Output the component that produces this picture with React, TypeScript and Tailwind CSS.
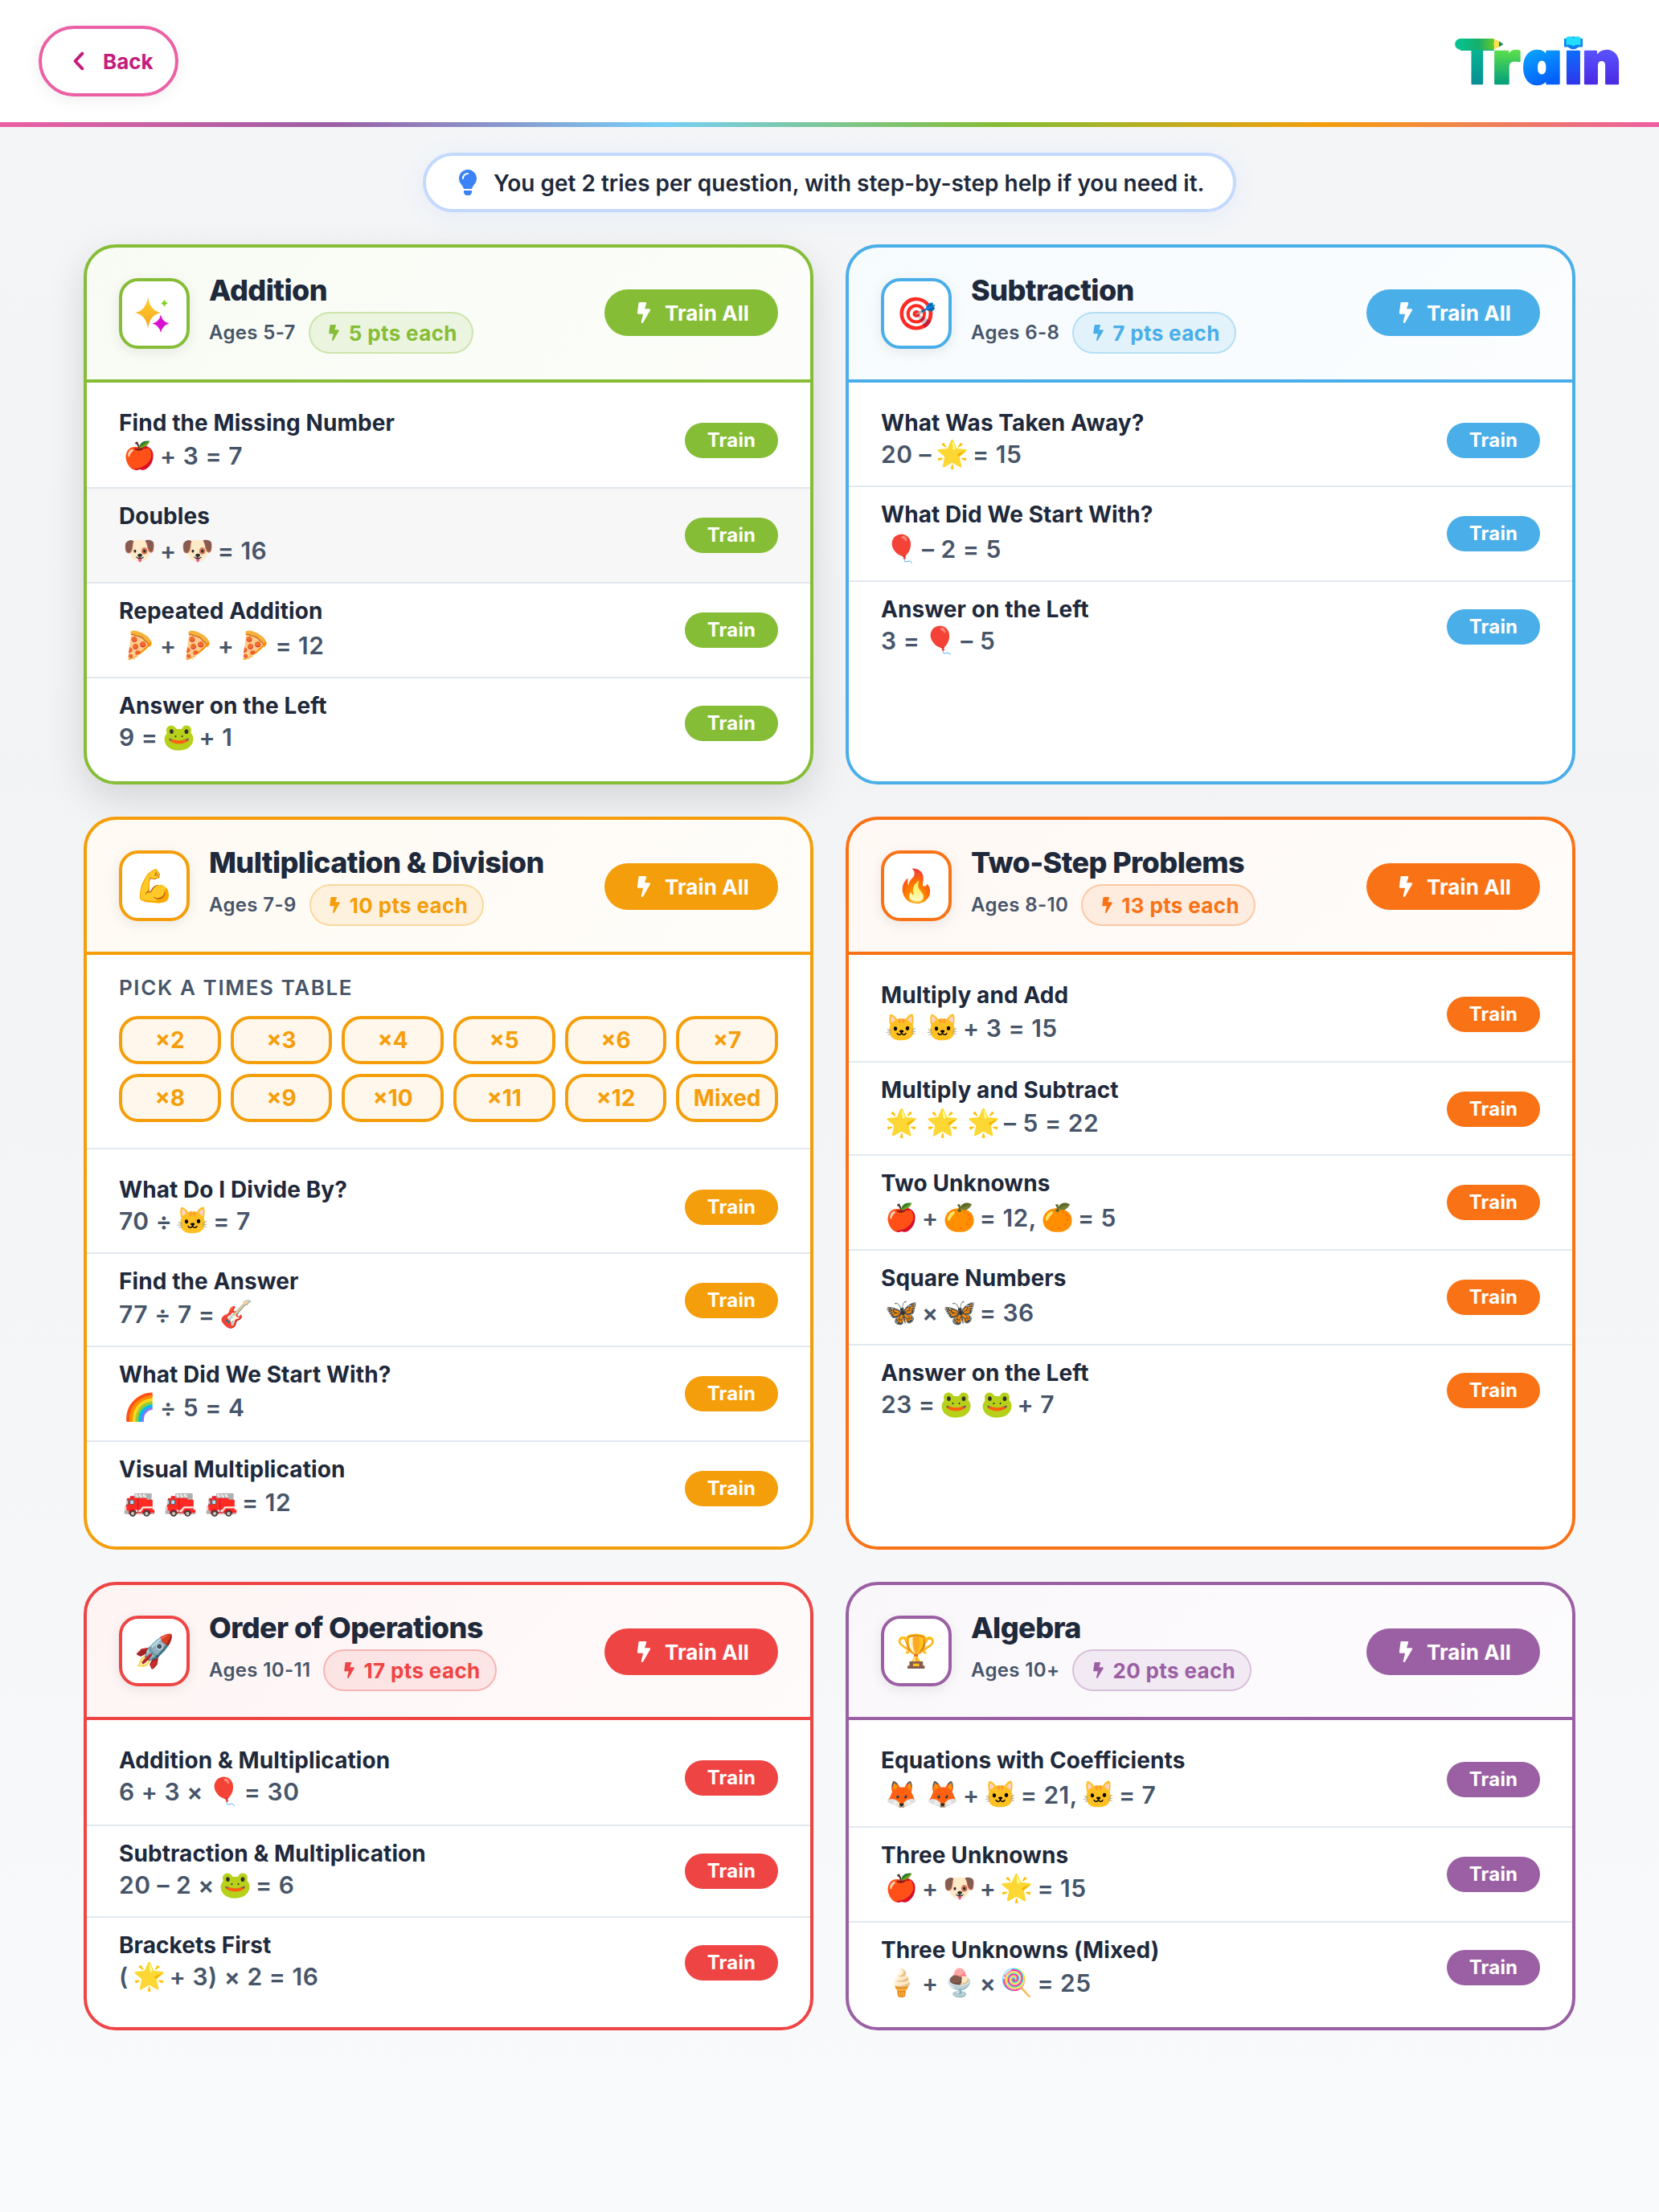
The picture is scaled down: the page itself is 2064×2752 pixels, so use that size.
import React from "react";
import { FaBolt, FaLightbulb } from "react-icons/fa";

type Row = {
  title: string;
  eq: string;
  /** classes: row height, gap above the equation, top margin of the button */
  h: string;
  gap: string;
  btn: string;
  hover?: boolean;
};

type Theme = {
  border: string;
  solid: string;
  header: string;
  badge: string;
};

type Section = {
  title: string;
  ages: string;
  pts: number;
  icon: string;
  theme: Theme;
  allTop: string;
  cardHeight: string;
  raised?: boolean;
  tables?: boolean;
  rows: Row[];
};

const G3 = "mt-[3px]";
const G5 = "mt-[5px]";
const G7 = "mt-[7px]";
const B34 = "mt-[34px]";
const B36 = "mt-[36px]";
const H114 = "h-[114px]";
const H116 = "h-[116px]";
const H118 = "h-[118px]";

const SECTIONS: Section[] = [
  {
    title: "Addition",
    ages: "Ages 5-7",
    pts: 5,
    icon: "sparkles",
    allTop: "mt-[52px]",
    cardHeight: "h-[672px]",
    raised: true,
    theme: {
      border: "border-[#86bd36]",
      solid: "bg-[#86bd36]",
      header: "bg-linear-135 from-[#86bd36]/6 to-[#86bd36]/2",
      badge: "text-[#86bd36] bg-[#86bd36]/12 border-[#86bd36]/30",
    },
    rows: [
      { title: "Find the Missing Number", eq: "🍎|+ 3 = 7", h: H116, gap: G5, btn: B34 },
      { title: "Doubles", eq: "🐶|+|🐶|= 16", h: H118, gap: G7, btn: B36, hover: true },
      { title: "Repeated Addition", eq: "🍕|+|🍕|+|🍕|= 12", h: H118, gap: G7, btn: B36 },
      { title: "Answer on the Left", eq: "9 =|🐸|+ 1", h: H114, gap: G3, btn: B34 },
    ],
  },
  {
    title: "Subtraction",
    ages: "Ages 6-8",
    pts: 7,
    icon: "🎯",
    allTop: "mt-[52px]",
    cardHeight: "h-[672px]",
    theme: {
      border: "border-[#4aaee8]",
      solid: "bg-[#4aaee8]",
      header: "bg-linear-135 from-[#4aaee8]/5 to-[#4aaee8]/2",
      badge: "text-[#4aaee8] bg-[#4aaee8]/12 border-[#4aaee8]/30",
    },
    rows: [
      { title: "What Was Taken Away?", eq: "20 –|🌟|= 15", h: H114, gap: G3, btn: B34 },
      { title: "What Did We Start With?", eq: "🎈|– 2 = 5", h: H118, gap: G7, btn: B36 },
      { title: "Answer on the Left", eq: "3 =|🎈|– 5", h: H114, gap: G3, btn: B34 },
    ],
  },
  {
    title: "Multiplication & Division",
    ages: "Ages 7-9",
    pts: 10,
    icon: "💪",
    allTop: "mt-[54px]",
    cardHeight: "h-[912px]",
    tables: true,
    theme: {
      border: "border-[#f59e0b]",
      solid: "bg-[#f59e0b]",
      header: "bg-linear-135 from-[#f59e0b]/5 to-[#f59e0b]/2",
      badge: "text-[#f59e0b] bg-[#f59e0b]/10 border-[#f59e0b]/30",
    },
    rows: [
      { title: "What Do I Divide By?", eq: "70 ÷|🐱|= 7", h: H114, gap: G3, btn: B34 },
      { title: "Find the Answer", eq: "77 ÷ 7 =|🎸|", h: H116, gap: G5, btn: B36 },
      { title: "What Did We Start With?", eq: "🌈|÷ 5 = 4", h: H118, gap: G5, btn: B36 },
      { title: "Visual Multiplication", eq: "🚒|🚒|🚒|= 12", h: H114, gap: G5, btn: B36 },
    ],
  },
  {
    title: "Two-Step Problems",
    ages: "Ages 8-10",
    pts: 13,
    icon: "🔥",
    allTop: "mt-[54px]",
    cardHeight: "h-[912px]",
    theme: {
      border: "border-[#f97316]",
      solid: "bg-[#f97316]",
      header: "bg-linear-135 from-[#f97316]/5 to-[#f97316]/2",
      badge: "text-[#f97316] bg-[#f97316]/10 border-[#f97316]/30",
    },
    rows: [
      { title: "Multiply and Add", eq: "🐱|🐱|+ 3 = 15", h: H118, gap: G5, btn: B36 },
      { title: "Multiply and Subtract", eq: "🌟|🌟|🌟|– 5 = 22", h: H116, gap: G5, btn: B36 },
      { title: "Two Unknowns", eq: "🍎|+|🍊|= 12,|🍊|= 5", h: H118, gap: G7, btn: B36 },
      { title: "Square Numbers", eq: "🦋|×|🦋|= 36", h: H118, gap: G7, btn: B36 },
      { title: "Answer on the Left", eq: "23 =|🐸|🐸|+ 7", h: H114, gap: G3, btn: B34 },
    ],
  },
  {
    title: "Order of Operations",
    ages: "Ages 10-11",
    pts: 17,
    icon: "🚀",
    allTop: "mt-[54px]",
    cardHeight: "h-[558px]",
    theme: {
      border: "border-[#ef4444]",
      solid: "bg-[#ef4444]",
      header: "bg-linear-135 from-[#ef4444]/6 to-[#ef4444]/2",
      badge: "text-[#ef4444] bg-[#ef4444]/10 border-[#ef4444]/30",
    },
    rows: [
      { title: "Addition & Multiplication", eq: "6 + 3 ×|🎈|= 30", h: H116, gap: G3, btn: B34 },
      { title: "Subtraction & Multiplication", eq: "20 – 2 ×|🐸|= 6", h: H114, gap: G3, btn: B34 },
      { title: "Brackets First", eq: "(|🌟|+ 3) × 2 = 16", h: H114, gap: G3, btn: B34 },
    ],
  },
  {
    title: "Algebra",
    ages: "Ages 10+",
    pts: 20,
    icon: "🏆",
    allTop: "mt-[54px]",
    cardHeight: "h-[558px]",
    theme: {
      border: "border-[#9b5fa4]",
      solid: "bg-[#9b5fa4]",
      header: "bg-linear-135 from-[#9b5fa4]/5 to-[#9b5fa4]/2",
      badge: "text-[#9b5fa4] bg-[#9b5fa4]/10 border-[#9b5fa4]/30",
    },
    rows: [
      { title: "Equations with Coefficients", eq: "🦊|🦊|+|🐱|= 21,|🐱|= 7", h: H118, gap: G7, btn: B36 },
      { title: "Three Unknowns", eq: "🍎|+|🐶|+|🌟|= 15", h: H118, gap: G5, btn: B36 },
      { title: "Three Unknowns (Mixed)", eq: "🍦|+|🍨|×|🍭|= 25", h: H114, gap: G5, btn: B34 },
    ],
  },
];

const TABLES = ["×2", "×3", "×4", "×5", "×6", "×7", "×8", "×9", "×10", "×11", "×12", "Mixed"];

const isEmoji = (s: string) => /\p{Extended_Pictographic}/u.test(s);

function Equation({ value }: { value: string }) {
  return (
    <>
      {value
        .split("|")
        .filter(Boolean)
        .map((part, i) =>
          isEmoji(part) ? (
            <span
              key={i}
              className={`-mr-px inline-flex w-[52px] justify-center text-[33px] leading-none tracking-normal ${
                part === "🍕" ? "-scale-x-100" : ""
              }`}
            >
              {part}
            </span>
          ) : (
            <span key={i}>{part}</span>
          ),
        )}
    </>
  );
}

function Sparkles() {
  return (
    <svg viewBox="0 0 80 80" className="size-20">
      <defs>
        <linearGradient id="sp" x1="0" y1="0" x2="0" y2="1">
          <stop offset="0" stopColor="#ffcf2e" />
          <stop offset="1" stopColor="#f7a521" />
        </linearGradient>
      </defs>
      <path d="M32 19 Q34 36 48 39 Q34 42 32 59 Q30 42 16 39 Q30 36 32 19Z" fill="url(#sp)" />
      <path d="M48 41.500 Q50 50.500 58.500 52.500 Q50 54.500 48 64 Q46 54.500 37.500 52.500 Q46 50.500 48 41.500Z" fill="#d911d0" />
      <path d="M52.500 22.500 Q53.500 26.300 57 27.300 Q53.500 28.300 52.500 32 Q51.500 28.300 48 27.300 Q51.500 26.300 52.500 22.500Z" fill="#7fd320" />
    </svg>
  );
}

function Logo() {
  return (
    <svg width="208" height="68" viewBox="0 0 208 68" className="overflow-visible" aria-label="Train">
      <defs>
        <linearGradient id="lt" x1="0" y1="-56" x2="0" y2="0" gradientUnits="userSpaceOnUse">
          <stop offset="0.2" stopColor="#08b78f" />
          <stop offset="1" stopColor="#088f96" />
        </linearGradient>
        <linearGradient id="lr" x1="0" y1="-41" x2="0" y2="0" gradientUnits="userSpaceOnUse">
          <stop offset="0" stopColor="#5be04c" />
          <stop offset="1" stopColor="#04a07a" />
        </linearGradient>
        <linearGradient id="la" x1="10" y1="-42" x2="28" y2="0" gradientUnits="userSpaceOnUse">
          <stop offset="0" stopColor="#0aa4ff" />
          <stop offset="1" stopColor="#0460f8" />
        </linearGradient>
        <linearGradient id="li" x1="0" y1="-41" x2="0" y2="0" gradientUnits="userSpaceOnUse">
          <stop offset="0" stopColor="#0d6dff" />
          <stop offset="1" stopColor="#2d38ea" />
        </linearGradient>
        <linearGradient id="ln" x1="0" y1="-41" x2="0" y2="0" gradientUnits="userSpaceOnUse">
          <stop offset="0" stopColor="#5a52ff" />
          <stop offset="1" stopColor="#4a2be2" />
        </linearGradient>
        <linearGradient id="lp" x1="2" y1="0" x2="50" y2="0" gradientUnits="userSpaceOnUse">
          <stop offset="0" stopColor="#07c596" />
          <stop offset="0.6" stopColor="#14ae6c" />
          <stop offset="1" stopColor="#62c72c" />
        </linearGradient>
      </defs>
      <g
        strokeLinejoin="round"
        strokeWidth="2.5"
        style={{ fontFeatureSettings: '"cv11"' }}
        className="font-['Inter'] text-[74px] font-black"
      >
        <text transform="translate(8 61.500) scale(0.86 1)" fill="url(#lt)" stroke="url(#lt)">T</text>
        <text transform="translate(48.500 61.500) scale(1.09 1)" fill="url(#lr)" stroke="url(#lr)">r</text>
        <text transform="translate(86 61.500) scale(1.03 1)" fill="url(#la)" stroke="url(#la)">a</text>
        <text transform="translate(138.500 61.500)" fill="url(#li)" stroke="url(#li)">i</text>
        <text transform="translate(160.500 61.500)" fill="url(#ln)" stroke="url(#ln)">n</text>
      </g>
      <path d="M9 6 H51 V19.8 H9 A6.9 6.900 0 0 1 9 6Z" fill="url(#lp)" />
      <path d="M50 6 L57 9.300 V16.500 L50 19.800 L51.500 16.300 L50 13 L51.500 9.700Z" fill="#ffdf4d" />
      <path d="M57 9.300 L62.500 13 L57 16.500Z" fill="#128c5a" />
      <path d="M138 6 H161 V16.500 L153 16.500 Q149.500 19.500 146 16.500 L138 16.500Z" fill="#0a84f0" />
      <path d="M140.500 4.500 Q146 2 149.500 5 Q153 2 158.500 4.500 V14 Q153 12.500 149.500 15.500 Q146 12.500 140.500 14Z" fill="#22defc" />
    </svg>
  );
}

function TimesTables() {
  return (
    <div className="h-[242px] border-b-2 border-[#e2e8f0] px-10 pt-6">
      <h3 className="h-[34px] text-[26px] leading-[34px] font-semibold tracking-[1.6px] text-[#475569]">
        PICK A TIMES TABLE
      </h3>
      <div className="mt-[18px] grid grid-cols-6 gap-3">
        {TABLES.map((t) => (
          <button
            key={t}
            className="flex h-[60px] items-center justify-center rounded-3xl border-4 border-[#f59e0b] bg-[#fff7eb] text-[28px] font-bold text-[#f59e0b]"
          >
            {t}
          </button>
        ))}
      </div>
    </div>
  );
}

function Card({ s }: { s: Section }) {
  const t = s.theme;
  return (
    <section
      className={`overflow-hidden rounded-[40px] border-4 bg-white ${t.border} ${s.cardHeight} ${
        s.raised ? "shadow-[0_16px_48px_rgba(0,0,0,0.13)]" : ""
      }`}
    >
      <header className={`flex h-[168px] items-start border-b-4 px-10 ${t.border} ${t.header}`}>
        <div
          className={`mt-[38px] flex size-[88px] shrink-0 items-center justify-center rounded-3xl border-4 bg-white text-[40px] leading-none shadow-[0_4px_16px_rgba(0,0,0,0.08)] ${t.border}`}
        >
          {s.icon === "sparkles" ? <Sparkles /> : s.icon}
        </div>
        <div className="ml-6 grow pt-[33px]">
          <h2 className="text-[36px] leading-10 font-extrabold tracking-[-0.6px] text-[#1e293b]">{s.title}</h2>
          <div className="mt-[7px] flex h-[52px] items-center gap-4">
            <span className="text-[24px] font-semibold tracking-[0.35px] text-[#475569]">{s.ages}</span>
            <span className={`flex h-[52px] items-center gap-2 rounded-full border-2 pr-[18px] pl-5 ${t.badge}`}>
              <span className="flex w-5 justify-center">
                <FaBolt className="h-5 w-[13px]" />
              </span>
              <span className="text-[26px] font-bold tracking-[0.35px]">{s.pts} pts each</span>
            </span>
          </div>
        </div>
        <button
          className={`flex h-[58px] w-[216px] shrink-0 items-center justify-center gap-[13px] rounded-full text-white ${t.solid} ${s.allTop}`}
        >
          <FaBolt className="h-[26px] w-[26px]" />
          <span className="text-[26px] font-bold tracking-[0.1px]">Train All</span>
        </button>
      </header>
      {s.tables && <TimesTables />}
      <ul className="pt-4">
        {s.rows.map((r, i) => (
          <li
            key={i}
            className={`flex items-start justify-between border-[#e2e8f0] px-10 ${r.h} ${
              i < s.rows.length - 1 ? "border-b-2" : ""
            } ${r.hover ? "bg-[#f7f7f7]" : ""}`}
          >
            <div className="pt-4">
              <h4 className="h-9 text-[28px] leading-9 font-bold tracking-[0.08px] text-[#1e293b]">{r.title}</h4>
              <p
                className={`h-9 text-[30px] leading-9 font-semibold tracking-[0.5px] whitespace-nowrap text-[#475569] ${r.gap}`}
              >
                <Equation value={r.eq} />
              </p>
            </div>
            <button
              className={`flex h-11 w-[116px] items-center justify-center rounded-full text-[24px] font-bold tracking-[0.2px] text-white ${t.solid} ${r.btn}`}
            >
              Train
            </button>
          </li>
        ))}
      </ul>
    </section>
  );
}

export default function App() {
  return (
    <div className="min-h-[2752px] bg-linear-to-b from-[#f4f6f8] via-[#f2f3f5] via-35% to-[#f8fafc] font-['Inter','Noto_Color_Emoji',sans-serif]">
      <div className="flex h-[152px] items-center justify-between bg-white px-12">
        <button className="flex h-[88px] w-[174px] items-center rounded-full border-4 border-[#eb5fa5] bg-white pl-[38px] text-[#c41c7d] shadow-[0_4px_20px_rgba(0,0,0,0.07)]">
          <svg width="16" height="24" viewBox="0 0 16 24" fill="none" className="shrink-0">
            <path d="M12.300 2.700 L3.600 12 L12.300 21.300" stroke="currentColor" strokeWidth="4" strokeLinecap="round" strokeLinejoin="round" />
          </svg>
          <span className="ml-[22px] text-[26px] font-bold">Back</span>
        </button>
        <Logo />
      </div>
      <div className="h-1.5 bg-[linear-gradient(90deg,#ec5fa4_0%,#9b5fa4_20%,#76cff5_40%,#84bd35_60%,#f59e0b_80%,#ec5fa4_100%)]" />
      <div className="flex justify-center pt-8">
        <div className="flex h-[74px] w-[1012px] items-center gap-4 rounded-full border-4 border-[#c3d9fd] bg-white pl-9 shadow-[0_4px_32px_rgba(59,130,246,0.08)]">
          <FaLightbulb className="size-8 shrink-0 text-[#3b82f6]" />
          <span className="pt-0.5 text-[28px] font-semibold whitespace-nowrap text-[#1e293b]">
            You get 2 tries per question, with step-by-step help if you need it.
          </span>
        </div>
      </div>
      <main className="grid grid-cols-2 gap-10 px-[104px] pt-10">
        {SECTIONS.map((s) => (
          <Card key={s.title} s={s} />
        ))}
      </main>
    </div>
  );
}
